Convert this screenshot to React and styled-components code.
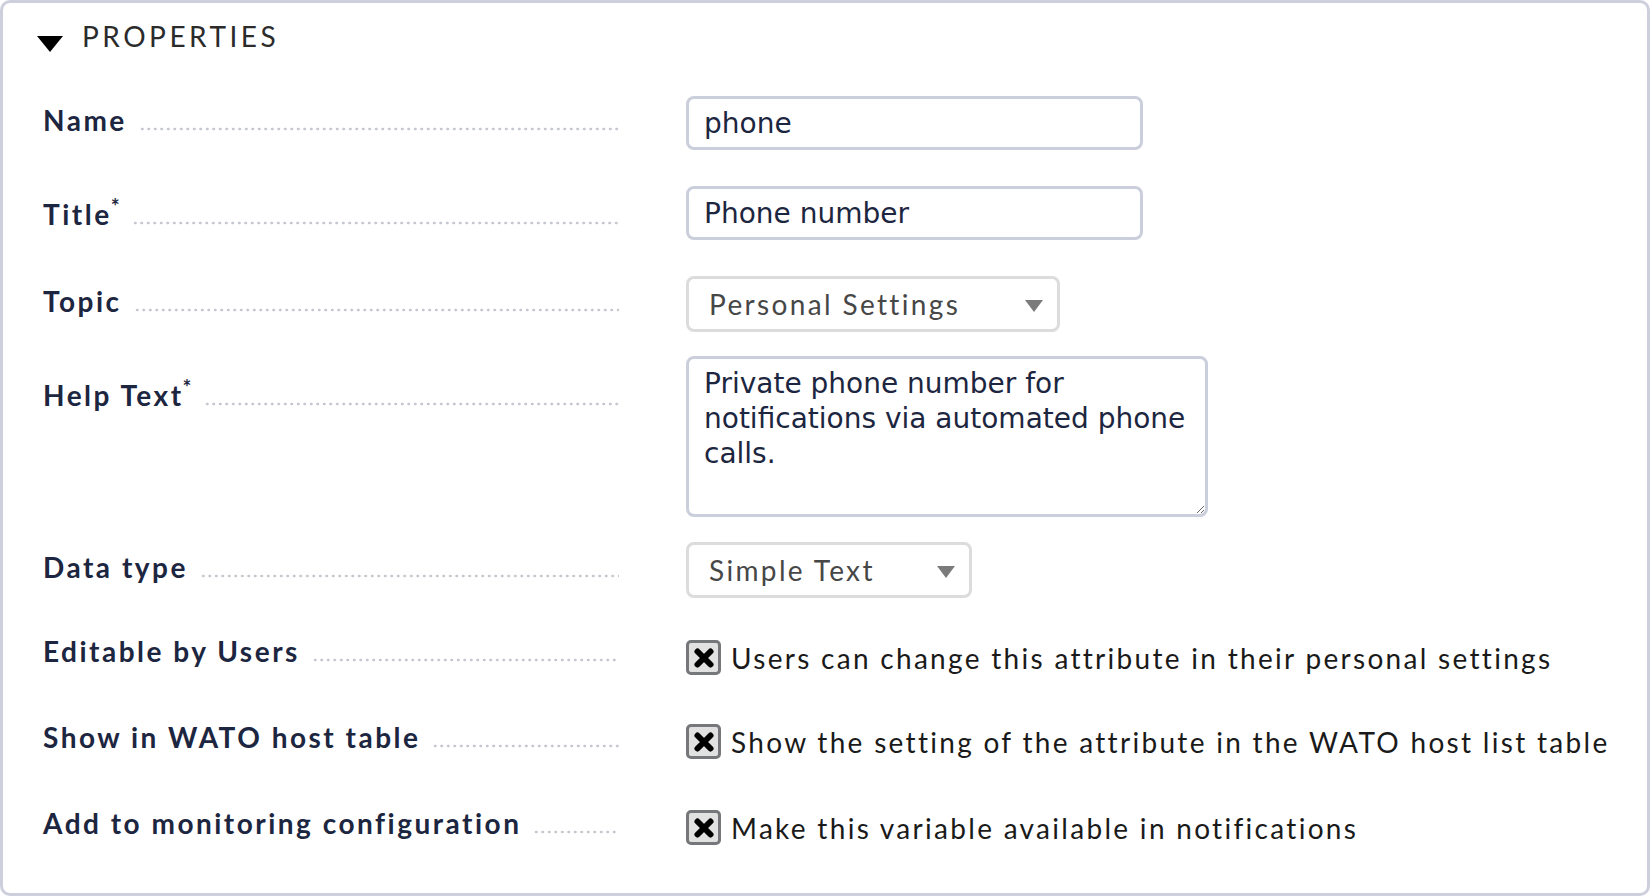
import React from 'react';
import styled, { createGlobalStyle } from 'styled-components';

const GlobalStyle = createGlobalStyle`
  html, body {
    margin: 0;
    padding: 0;
    background: #ffffff;
  }
  body {
    font-family: Lato, "Liberation Sans", sans-serif;
  }
`;

const Panel = styled.div`
  box-sizing: border-box;
  width: 1650px;
  height: 896px;
  border: 3px solid #cdd0dc;
  border-radius: 10px;
  padding: 16px 0 0 34px;
  background: #fff;
`;

const Header = styled.div`
  display: flex;
  align-items: flex-start;
  gap: 19px;
`;

const Caret = styled.span`
  width: 0;
  height: 0;
  margin-top: 17px;
  border-left: 13px solid transparent;
  border-right: 13px solid transparent;
  border-top: 16px solid #000;
`;

const HeaderTitle = styled.span`
  font-size: 28px;
  line-height: 34px;
  letter-spacing: 3.5px;
  color: #2b2b2b;
`;

const Form = styled.div`
  display: flex;
  flex-direction: column;
  padding-left: 6px;
`;

const Row = styled.div`
  display: grid;
  grid-template-columns: 576px auto;
  column-gap: 67px;
  align-items: start;
  margin-top: ${props => props.$gap}px;
`;

const Legend = styled.div`
  display: flex;
  align-items: flex-end;
  gap: 12px;
  margin-top: ${props => props.$offset}px;
  font-weight: 700;
  font-size: 28px;
  line-height: 34px;
  letter-spacing: 2.5px;
  color: #1d2640;
  white-space: nowrap;
`;

const Star = styled.span`
  font-size: 21px;
  line-height: 18px;
  letter-spacing: 0;
  vertical-align: top;
  margin-left: -1px;
`;

const Dots = styled.span`
  flex: 1;
  height: 4px;
  margin-bottom: 6px;
  background-image: radial-gradient(circle at center, #c6c8d0 1.2px, transparent 1.7px);
  background-size: 6.5px 4px;
  background-repeat: repeat-x;
`;

const TextInput = styled.input`
  box-sizing: border-box;
  width: 457px;
  height: 54px;
  margin: 0;
  border: 3px solid #cbcedb;
  border-radius: 8px;
  padding: 0 15px;
  font-family: "DejaVu Sans", sans-serif;
  font-size: 28px;
  color: #1d2640;
  background: #fff;
  outline: none;
`;

const TextArea = styled.textarea`
  box-sizing: border-box;
  display: block;
  width: 522px;
  height: 161px;
  margin: 0;
  border: 3px solid #cbcedb;
  border-radius: 8px;
  padding: 7px 15px;
  font-family: "DejaVu Sans", sans-serif;
  font-size: 28px;
  line-height: 35px;
  color: #1d2640;
  background: #fff;
  outline: none;
  overflow: hidden;
`;

const Select = styled.div`
  box-sizing: border-box;
  width: ${props => props.$width}px;
  height: 56px;
  border: 3px solid #dcdcdc;
  border-radius: 8px;
  display: flex;
  align-items: center;
  justify-content: space-between;
  padding: 0 14px 0 20px;
  font-size: 28px;
  letter-spacing: 2.35px;
  color: #474747;
  white-space: nowrap;
`;

const SelectArrow = styled.span`
  width: 0;
  height: 0;
  margin-top: 3px;
  border-left: 9.5px solid transparent;
  border-right: 9.5px solid transparent;
  border-top: 12px solid #7b7b7b;
`;

const CheckLine = styled.label`
  display: flex;
  align-items: center;
  gap: 10px;
  margin-top: 6px;
  font-size: 28px;
  line-height: 34px;
  letter-spacing: 2.3px;
  color: #1a1a1a;
  white-space: nowrap;
`;

const CheckBox = styled.span`
  box-sizing: border-box;
  width: 35px;
  height: 35px;
  border: 3px solid #75777b;
  border-radius: 5px;
  background: #e1e1e1;
  display: flex;
  align-items: center;
  justify-content: center;
  flex-shrink: 0;
`;

const CrossIcon = () => (
  <svg width="22" height="22" viewBox="0 0 22 22">
    <path d="M4.5 4.5 L17.5 17.5 M17.5 4.5 L4.5 17.5" stroke="#000" strokeWidth="6" strokeLinecap="round" />
  </svg>
);

const Label = ({ text, star, offset }) => (
  <Legend $offset={offset}>
    <span>
      {text}
      {star && <Star>*</Star>}
    </span>
    <Dots />
  </Legend>
);

const Checkbox = ({ children }) => (
  <CheckLine>
    <CheckBox>
      <CrossIcon />
    </CheckBox>
    {children}
  </CheckLine>
);

const App = () => {
  return (
    <>
      <GlobalStyle />
      <Panel>
        <Header>
          <Caret />
          <HeaderTitle>PROPERTIES</HeaderTitle>
        </Header>

        <Form>
          <Row $gap={43}>
            <Label text="Name" offset={7} />
            <TextInput value="phone" readOnly />
          </Row>

          <Row $gap={36}>
            <Label text="Title" star offset={11} />
            <TextInput value="Phone number" readOnly />
          </Row>

          <Row $gap={36}>
            <Label text="Topic" offset={8} />
            <Select $width={374}>
              <span>Personal Settings</span>
              <SelectArrow />
            </Select>
          </Row>

          <Row $gap={24}>
            <Label text="Help Text" star offset={22} />
            <TextArea
              value="Private phone number for notifications via automated phone calls."
              readOnly
            />
          </Row>

          <Row $gap={25}>
            <Label text="Data type" offset={8} />
            <Select $width={286}>
              <span>Simple Text</span>
              <SelectArrow />
            </Select>
          </Row>

          <Row $gap={36}>
            <Label text="Editable by Users" offset={0} />
            <Checkbox>Users can change this attribute in their personal settings</Checkbox>
          </Row>

          <Row $gap={43}>
            <Label text="Show in WATO host table" offset={2} />
            <Checkbox>Show the setting of the attribute in the WATO host list table</Checkbox>
          </Row>

          <Row $gap={45}>
            <Label text="Add to monitoring configuration" offset={2} />
            <Checkbox>Make this variable available in notifications</Checkbox>
          </Row>
        </Form>
      </Panel>
    </>
  );
};

export default App;
